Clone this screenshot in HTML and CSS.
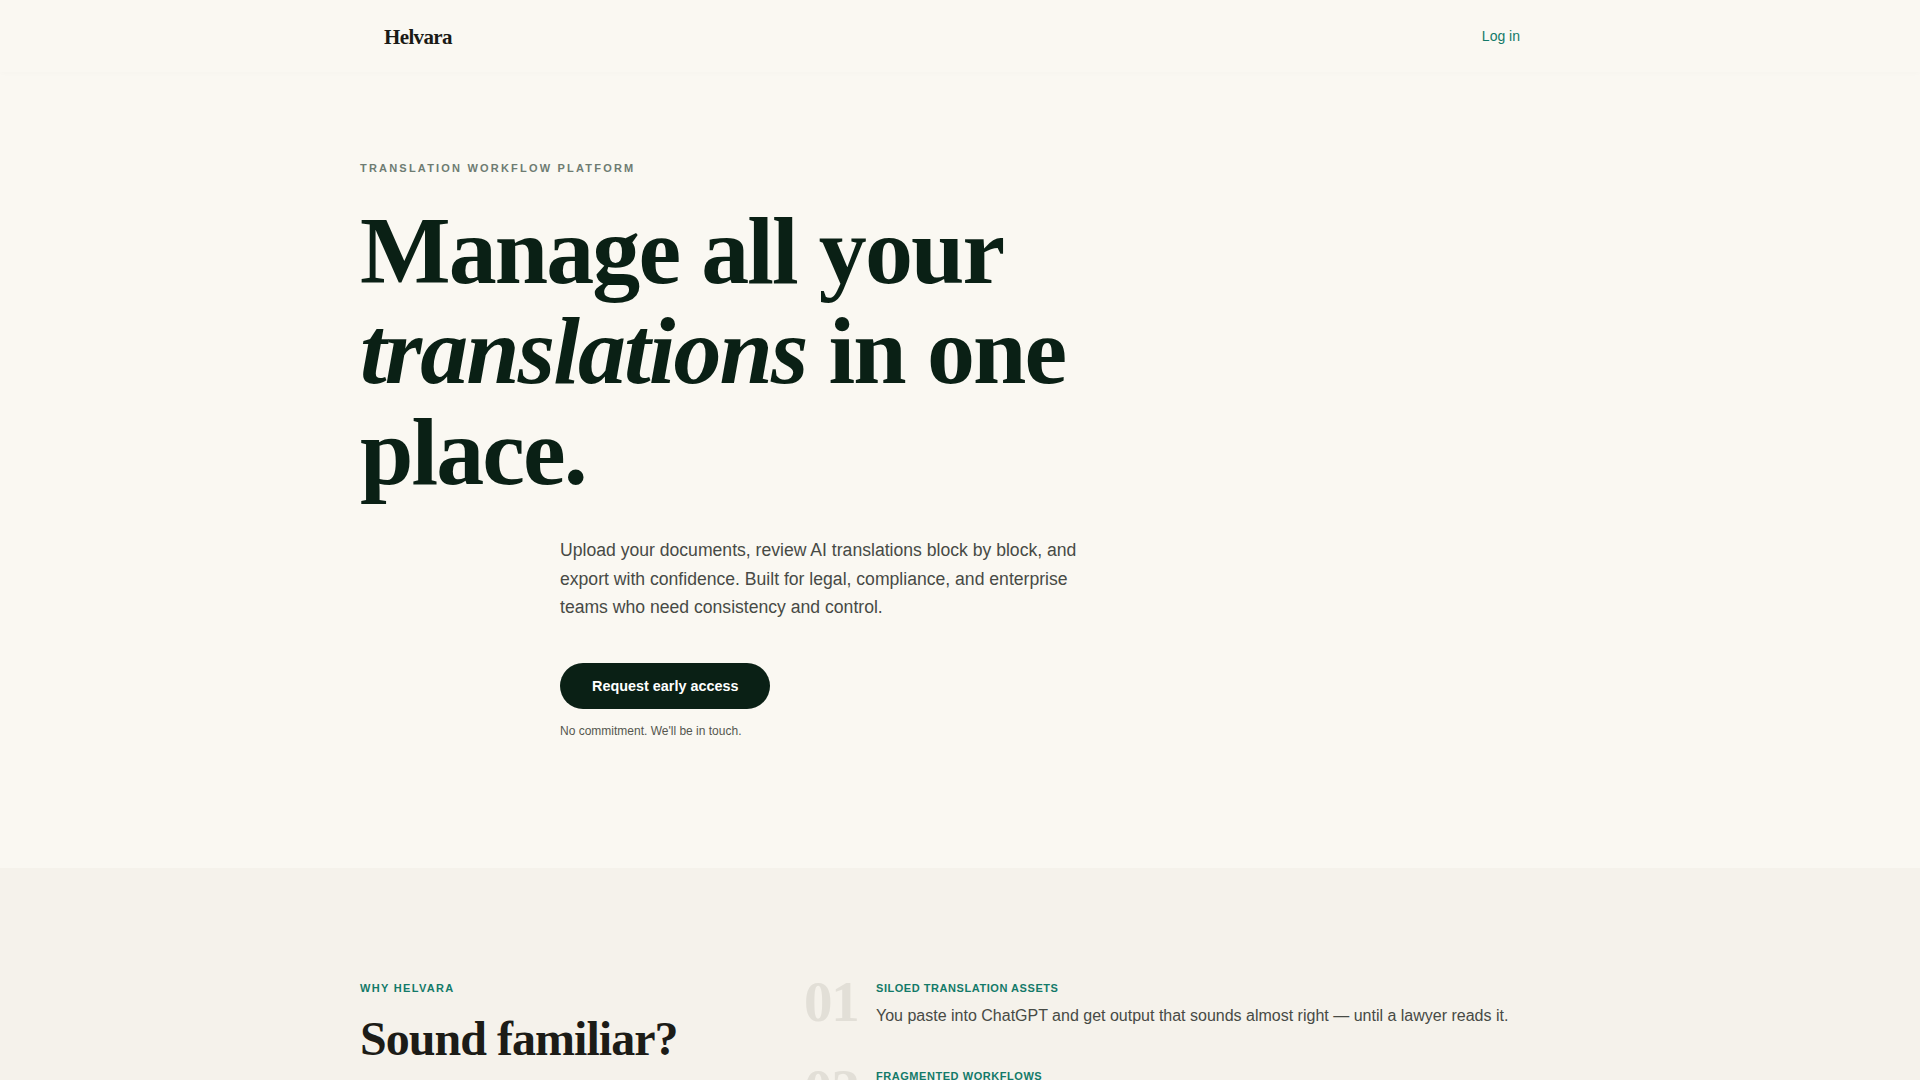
FILE: index.html
```html
<!DOCTYPE html>
<html lang="en">
<head>
<meta charset="utf-8">
<title>Helvara — Translation workflow platform</title>
<link rel="stylesheet" href="styles.css">
</head>
<body>
<header class="nav">
  <div class="container nav-inner">
    <a class="brand" href="#">Helvara</a>
    <a class="login" href="#">Log in</a>
  </div>
</header>

<main>
  <section class="hero">
    <div class="container">
      <p class="eyebrow">Translation workflow platform</p>
      <h1 class="hero-title">Manage all your<br><em>translations</em> in one<br>place.</h1>
      <div class="hero-body">
        <p class="lead">Upload your documents, review AI translations block by block, and export with confidence. Built for legal, compliance, and enterprise teams who need consistency and control.</p>
        <a class="btn" href="#">Request early access</a>
        <p class="note">No commitment. We'll be in touch.</p>
      </div>
    </div>
  </section>

  <section class="why">
    <div class="container why-grid">
      <div class="why-head">
        <p class="kicker">Why Helvara</p>
        <h2 class="why-title">Sound familiar?</h2>
      </div>
      <ol class="problems">
        <li class="problem">
          <span class="num">01</span>
          <div>
            <p class="problem-label">Siloed translation assets</p>
            <p class="problem-text">You paste into ChatGPT and get output that sounds almost right — until a lawyer reads it.</p>
          </div>
        </li>
        <li class="problem">
          <span class="num">02</span>
          <div>
            <p class="problem-label">Fragmented workflows</p>
            <p class="problem-text">Files bounce between email, shared drives and vendors, and nobody knows which version is final.</p>
          </div>
        </li>
        <li class="problem">
          <span class="num">03</span>
          <div>
            <p class="problem-label">No consistency</p>
            <p class="problem-text">The same clause gets translated three different ways across three different documents.</p>
          </div>
        </li>
      </ol>
    </div>
  </section>
</main>
</body>
</html>
```

FILE: styles.css
```css
* { box-sizing: border-box; }

html, body {
  margin: 0;
  padding: 0;
}

body {
  background: #faf8f2;
  color: #1c1c17;
  font-family: "Liberation Sans", Arial, sans-serif;
}

a { text-decoration: none; }

.container {
  max-width: 1200px;
  margin: 0 auto;
}

/* Nav */
.nav {
  background: #faf8f2;
  box-shadow: 0 1px 6px rgba(30, 40, 30, 0.02);
}

.nav-inner {
  height: 72px;
  padding: 0 24px;
  display: flex;
  align-items: center;
  justify-content: space-between;
}

.brand {
  font-family: "Liberation Serif", "Times New Roman", serif;
  font-weight: 700;
  font-size: 21px;
  letter-spacing: -0.03em;
  color: #1a1a16;
  padding-top: 2px;
}

.login {
  font-size: 14px;
  color: #137a69;
  padding: 8px 16px;
}

/* Hero */
.hero {
  padding: 90px 0 128px;
}

.eyebrow {
  margin: 0 0 26px;
  font-size: 11px;
  line-height: 1.15;
  font-weight: 700;
  letter-spacing: 0.2em;
  text-transform: uppercase;
  color: #6e7c72;
}

.hero-title {
  margin: 0;
  font-family: "Liberation Serif", "Times New Roman", serif;
  font-weight: 700;
  font-size: 96px;
  line-height: 1.05;
  letter-spacing: -0.02em;
  color: #0a2015;
}

.hero-title em {
  font-style: italic;
}

.hero-body {
  margin: 33px 0 0 200px;
  max-width: 540px;
}

.lead {
  margin: 0;
  font-size: 17.6px;
  line-height: 28.5px;
  color: #474a45;
}

.btn {
  display: inline-block;
  margin-top: 41px;
  padding: 14px 32px;
  border-radius: 999px;
  background: #0a2015;
  color: #ffffff;
  font-weight: 700;
  font-size: 14.4px;
  line-height: 18px;
}

.note {
  margin: 13px 0 0;
  font-size: 12px;
  line-height: 18px;
  color: #55574f;
}

/* Why section */
.why {
  background: #f5f2eb;
  padding: 114px 0 120px;
}

.why-grid {
  display: grid;
  grid-template-columns: 380px 1fr;
  column-gap: 64px;
  align-items: start;
}

.kicker {
  margin: 0;
  font-size: 11px;
  line-height: 1.15;
  font-weight: 700;
  letter-spacing: 0.12em;
  text-transform: uppercase;
  color: #137a69;
}

.why-title {
  margin: 19px 0 0;
  font-family: "Liberation Serif", "Times New Roman", serif;
  font-weight: 700;
  font-size: 48px;
  line-height: 1.1;
  letter-spacing: -0.02em;
  color: #1c1c17;
}

.problems {
  list-style: none;
  margin: 0;
  padding: 0;
  display: flex;
  flex-direction: column;
  gap: 40px;
}

.problem {
  display: grid;
  grid-template-columns: 56px 1fr;
  column-gap: 16px;
  align-items: start;
}

.num {
  display: block;
  margin-top: -9px;
  font-family: "Liberation Serif", "Times New Roman", serif;
  font-weight: 700;
  font-size: 57px;
  line-height: 1;
  letter-spacing: -0.02em;
  color: #e2dfd7;
}

.problem-label {
  margin: 0;
  font-size: 11px;
  line-height: 1.15;
  font-weight: 700;
  letter-spacing: 0.05em;
  text-transform: uppercase;
  color: #137a69;
}

.problem-text {
  margin: 9px 0 0;
  font-size: 16px;
  line-height: 1.6;
  color: #474a45;
}
```
